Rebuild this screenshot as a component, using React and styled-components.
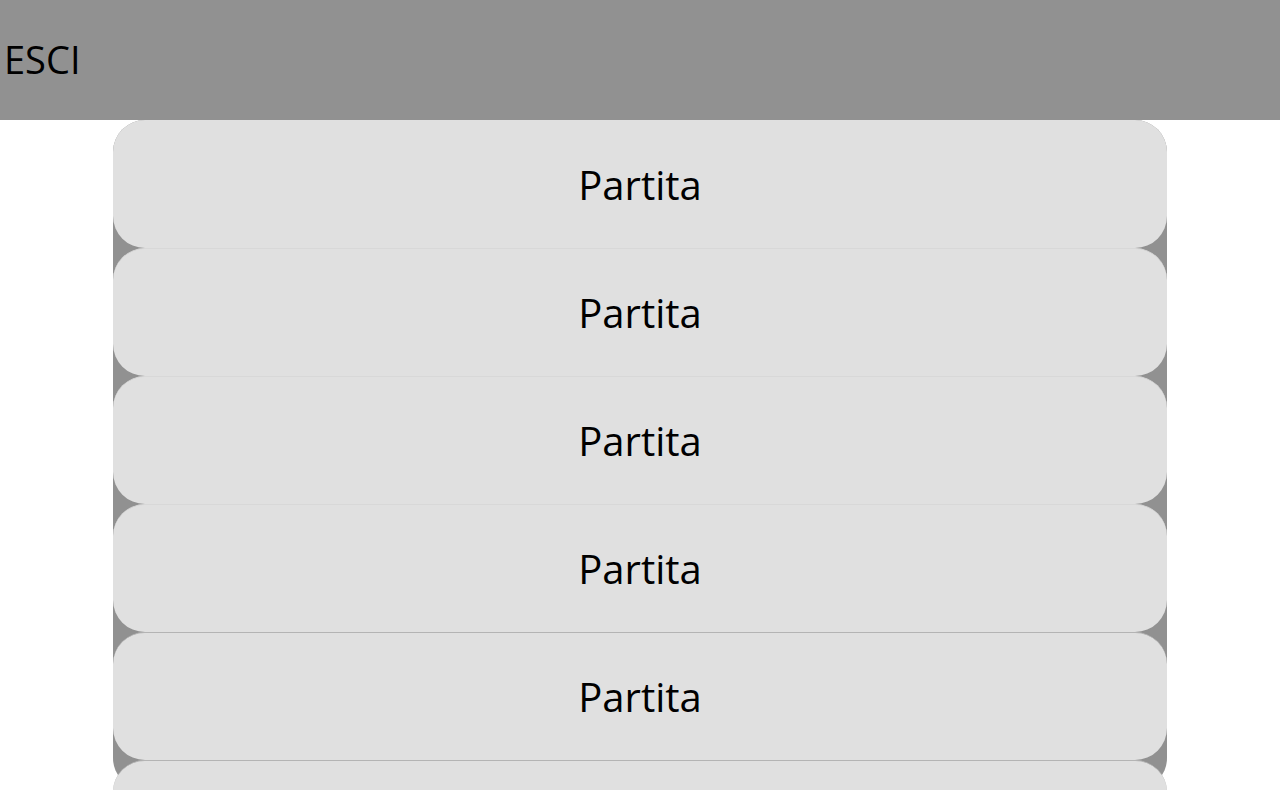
import React from 'react';
import styled, { createGlobalStyle } from 'styled-components';

const GlobalStyle = createGlobalStyle`
  html, body {
    margin: 0;
    padding: 0;
    background: #ffffff;
    font-family: "Open Sans", "Liberation Sans", sans-serif;
    overflow: hidden;
  }
`;

const Header = styled.header`
  height: 120px;
  background: #919191;
  display: flex;
  align-items: center;
  padding-left: 4px;
`;

const ExitButton = styled.div`
  font-size: 38px;
  color: #000;
  margin-bottom: 3px;
  cursor: pointer;
`;

const MatchList = styled.div`
  width: 1054px;
  height: 670px;
  margin: 0 auto;
  background: #919191;
  border-radius: 32px;
  display: flex;
  flex-direction: column;
`;

const MatchItem = styled.div`
  flex-shrink: 0;
  height: 128px;
  box-sizing: border-box;
  background: #e0e0e0;
  border-radius: 32px;
  border-top: 1px solid ${props => (props.dark ? '#b4b4b4' : '#d8d8d8')};
  display: flex;
  align-items: center;
  justify-content: center;
  font-size: 40px;
  color: #000;
  cursor: pointer;
  &:first-child {
    border-top: none;
  }
`;

const matches = [0, 1, 2, 3, 4, 5];

const App = () => {
  return (
    <>
      <GlobalStyle />
      <Header>
        <ExitButton>ESCI</ExitButton>
      </Header>
      <MatchList>
        {matches.map(i => (
          <MatchItem key={i} dark={i >= 4}>
            Partita
          </MatchItem>
        ))}
      </MatchList>
    </>
  );
};

export default App;
